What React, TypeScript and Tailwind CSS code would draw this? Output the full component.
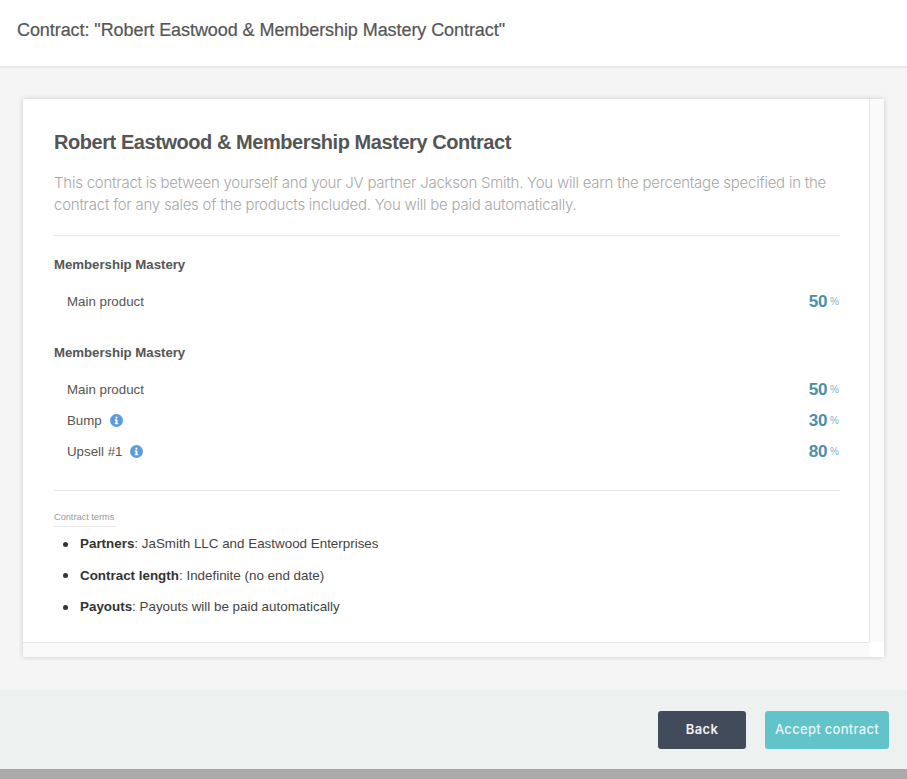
import React from "react";

const sans = "font-['Liberation_Sans',Arial,sans-serif]";

const InfoIcon = () => (
    <svg width="13" height="13" viewBox="0 0 13 13" className="ml-[8px]">
        <circle cx="6.5" cy="6.5" r="6.5" fill="#5b9bdc" />
        <rect x="5.5" y="5.5" width="2" height="4.5" fill="#fff" />
        <rect x="4.7" y="5.5" width="2" height="1" fill="#fff" />
        <rect x="4.7" y="9.2" width="3.6" height="1" fill="#fff" />
        <circle cx="6.4" cy="3.6" r="1.1" fill="#fff" />
    </svg>
);

const Row = ({ label, value, info }: { label: string; value: number; info?: boolean }) => (
    <div className="flex h-[31px] items-center justify-between pl-[13px] pr-[1px]">
        <div className="flex items-center text-[13.3px] text-[#555]">
            {label}
            {info && <InfoIcon />}
        </div>
        <div className="flex items-center text-[#4b8fa9]">
            <span className="text-[17px] font-bold tracking-[-0.3px]">{value}</span>
            <span className="ml-[3px] text-[10px] text-[#7fb0c4]">%</span>
        </div>
    </div>
);

const Term = ({ name, text }: { name: string; text: string }) => (
    <li className="flex h-[31.5px] items-center text-[13.4px] text-[#444]">
        <span className="mr-[12px] h-[5px] w-[5px] rounded-full bg-[#333]" />
        <span>
            <b className="text-[#333]">{name}</b>: {text}
        </span>
    </li>
);

export default function App() {
    return (
        <div className={`flex h-[779px] flex-col overflow-hidden bg-[#f5f5f5] ${sans}`}>
            <header className="flex h-[68px] items-center border-b-2 border-[#e8e8e8] bg-white pb-[6px] pl-[17px]">
                <h1 className="text-[18px] tracking-[-0.07px] text-[#555] [-webkit-text-stroke:0.2px_#555]">
                    Contract: "Robert Eastwood &amp; Membership Mastery Contract"
                </h1>
            </header>

            <main className="flex h-[622px] flex-col pl-[23px] pr-[23px] pt-[31px]">
                <div className="relative h-[558px] w-[861px] bg-[#fafafa] shadow-[0_0_5px_rgba(0,0,0,0.18)]">
                    <div className="h-[544px] w-[847px] border-b border-r border-[#e6e6e6] bg-white pl-[31px] pr-[29px] pt-[31px]">
                        <h2 className="text-[20px] font-bold leading-[24px] tracking-[-0.44px] text-[#555]">
                            Robert Eastwood &amp; Membership Mastery Contract
                        </h2>
                        <p className="mt-[18px] h-[64px] border-b border-[#e8e8e8] font-['Inter',sans-serif] text-[15px] font-light leading-[22px] tracking-[-0.24px] text-[#a8a8a8]">
                            This contract is between yourself and your JV partner Jackson Smith. You will earn the percentage specified in the contract for any sales of the products included. You will be paid automatically.
                        </p>
                        <h3 className="mt-[21px] text-[13.2px] font-bold leading-[16px] text-[#555]">Membership Mastery</h3>
                        <div className="mt-[13px]">
                            <Row label="Main product" value={50} />
                        </div>
                        <h3 className="mt-[28px] text-[13.2px] font-bold leading-[16px] text-[#555]">Membership Mastery</h3>
                        <div className="mt-[13px]">
                            <Row label="Main product" value={50} />
                            <Row label="Bump" value={30} info />
                            <Row label="Upsell #1" value={80} info />
                        </div>
                        <div className="mt-[23px] border-t border-[#e8e8e8] pt-[21px]">
                            <div className="w-[62px] border-b border-[#e8e8e8] pb-[3px] text-[9.2px] leading-[11px] text-[#999]">
                                Contract terms
                            </div>
                            <ul className="mt-[1.4px] pl-[9px]">
                                <Term name="Partners" text="JaSmith LLC and Eastwood Enterprises" />
                                <Term name="Contract length" text="Indefinite (no end date)" />
                                <Term name="Payouts" text="Payouts will be paid automatically" />
                            </ul>
                        </div>
                    </div>
                    <div className="absolute bottom-0 right-0 h-[15px] w-[15px] bg-white" />
                </div>
            </main>

            <footer className="flex h-[79px] items-center justify-end gap-[19px] bg-[#edf1f0] pr-[18px] font-['Inter',sans-serif] text-[13px] tracking-[0.4px]">
                <button className="h-[38px] w-[88px] rounded-[3px] bg-[#414b59] pt-px font-semibold text-[#f1f3f5]">Back</button>
                <button className="h-[38px] w-[124px] rounded-[3px] bg-[#62c3c9] pt-px font-medium tracking-[0.3px] text-[#e3f5f5]">Accept contract</button>
            </footer>
            <div className="h-[10px] bg-[#aaaaaa]" />
        </div>
    );
}
